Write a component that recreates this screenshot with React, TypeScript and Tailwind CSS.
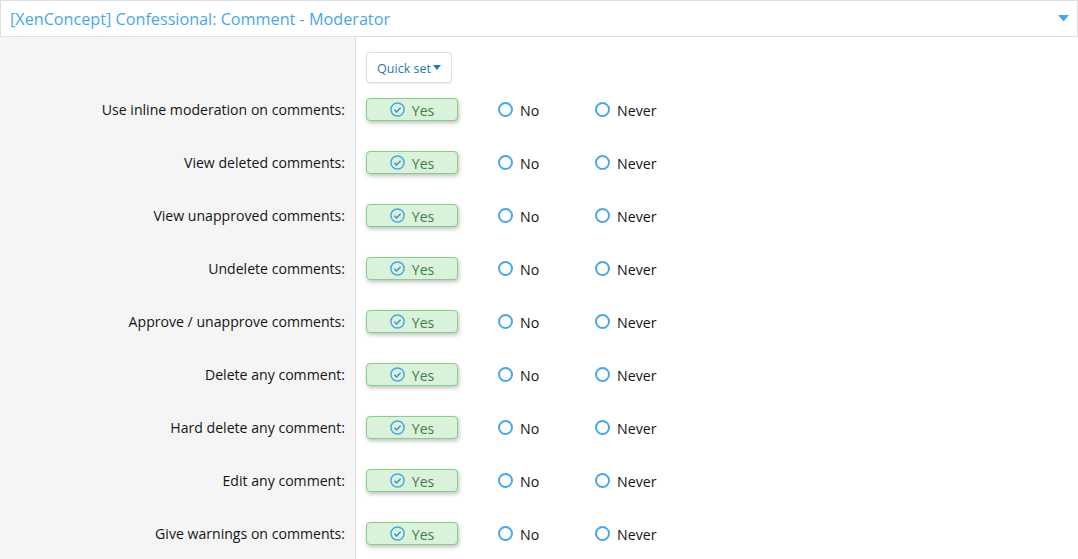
const rows = [
  'Use inline moderation on comments:',
  'View deleted comments:',
  'View unapproved comments:',
  'Undelete comments:',
  'Approve / unapprove comments:',
  'Delete any comment:',
  'Hard delete any comment:',
  'Edit any comment:',
  'Give warnings on comments:',
]

const CheckCircle = () => (
  <svg width="15" height="15" viewBox="0 0 15 15" fill="none" className="shrink-0">
    <circle cx="7.5" cy="7.5" r="6.6" stroke="#47a7eb" strokeWidth="1.5" />
    <path d="M4.4 7.7l2.2 2.2 4-4.2" stroke="#3f8fb5" strokeWidth="1.4" />
  </svg>
)

const Radio = ({ label, className }: { label: string; className: string }) => (
  <div className={`mt-[1px] flex items-center gap-[7px] ${className}`}>
    <span className="mb-[1px] h-[15px] w-[15px] rounded-full border-2 border-[#47a7eb] bg-white" />
    <span className="pt-[1px] text-[14.2px] text-[#141414]">{label}</span>
  </div>
)

export default function App() {
  return (
    <div className="h-[559px] w-[1078px] overflow-hidden bg-white font-['Open_Sans',sans-serif]">
      <div className="flex h-[37px] items-center justify-between border border-[#dfdfdf] px-[9px]">
        <h2 className="pt-[2px] text-[16.2px] text-[#47a7eb]">[XenConcept] Confessional: Comment - Moderator</h2>
        <svg width="11" height="7" viewBox="0 0 11 7" className="mr-[-1px] mt-[-1px]">
          <path d="M0 0h11L5.5 6.5z" fill="#47a7eb" />
        </svg>
      </div>
      <div className="flex h-[522px]">
        <div className="w-[356px] shrink-0 border-r border-[#dfdfdf] bg-[#f5f5f5]">
          <div className="h-[53px]" />
          {rows.map((row) => (
            <div key={row} className="flex h-[53px] items-start justify-end pr-[10px] pt-[9px] text-[14.1px] text-[#141414]">
              {row}
            </div>
          ))}
        </div>
        <div className="flex-1 pl-[10px] pt-[15px]">
          <button className="flex h-[31px] w-[86px] items-center justify-center rounded-[4px] border border-[#dfdfdf] bg-white pt-[4px] text-[12.5px] text-[#2577b1] shadow-[0_1px_1px_rgba(0,0,0,0.08)]">
            Quick set
            <svg width="8" height="5" viewBox="0 0 8 5" className="mb-[4px] ml-[2px]">
              <path d="M0 0h8L4 5z" fill="#2577b1" />
            </svg>
          </button>
          <div className="mt-[15px] flex flex-col gap-[30px]">
            {rows.map((row) => (
              <div key={row} className="flex h-[23px] items-center">
                <div className="flex h-[23px] w-[92px] items-center justify-center gap-[7px] rounded-[4px] border border-[#84d08a] bg-[#d9f2d9] text-[14px] text-[#3f7f4a] shadow-[1px_2px_4px_rgba(0,0,0,0.25)]">
                  <CheckCircle />
                  <span className="pt-[1px]">Yes</span>
                </div>
                <Radio label="No" className="ml-[40px] w-[97px]" />
                <Radio label="Never" className="" />
              </div>
            ))}
          </div>
        </div>
      </div>
    </div>
  )
}
